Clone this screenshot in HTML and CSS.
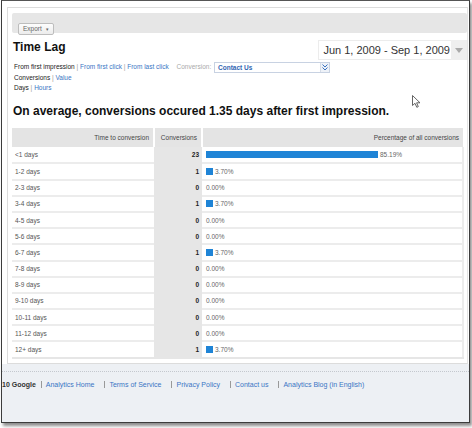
FILE: index.html
```html
<!DOCTYPE html>
<html lang="en">
<head>
    <meta charset="UTF-8">
    <title>Time Lag</title>
    <link rel="stylesheet" href="styles.css">
</head>
<body>
<div class="frame">
    <div class="top">
        <div class="panel">
            <div class="toolbar">
                <a href="javascript:;" class="export">Export <span class="caret">&#9662;</span></a>
            </div>
            <div class="head">
                <h1>Time Lag</h1>
                <div class="daterange">
                    <span class="dates">Jun 1, 2009 - Sep 1, 2009</span>
                    <span class="dd"><svg width="8" height="5" viewBox="0 0 8 5"><path d="M0 0h8L4 5z" fill="#aaa"/></svg></span>
                </div>
            </div>
            <div class="opts">
                <div class="optline">
                    <span class="cur">From first impression</span> | <a href="javascript:;">From first click</a> | <a href="javascript:;">From last click</a>
                    <span class="convlabel">Conversion:</span>
                    <span class="select">Contact Us
                        <span class="chev"><svg width="6" height="7" viewBox="0 0 6 7"><path d="M0.5 0.5L3 3L5.5 0.5M0.5 3.5L3 6L5.5 3.5" fill="none" stroke="#3a72c0" stroke-width="1"/></svg></span>
                    </span>
                </div>
                <div class="optline"><span class="cur">Conversions</span> | <a href="javascript:;">Value</a></div>
                <div class="optline"><span class="cur">Days</span> | <a href="javascript:;">Hours</a></div>
            </div>
            <svg class="pointer" width="9" height="13" viewBox="0 0 9 13"><path d="M0.5 0.5V10.5L3 8.3L4.8 12.3L6.3 11.6L4.6 7.8H8z" fill="#fff" stroke="#555" stroke-width="0.9"/></svg>
            <h2>On average, conversions occured 1.35 days after first impression.</h2>
            <table class="lag">
                <thead>
                <tr><th class="c1">Time to conversion</th><th class="c2">Conversions</th><th class="c3">Percentage of all conversions</th></tr>
                </thead>
                <tbody>
                <tr><td class="c1">&lt;1 days</td><td class="c2">23</td><td class="c3"><span class="bar" style="width:172px"></span>85.19%</td></tr>
                <tr><td class="c1">1-2 days</td><td class="c2">1</td><td class="c3"><span class="bar" style="width:7px"></span>3.70%</td></tr>
                <tr><td class="c1">2-3 days</td><td class="c2">0</td><td class="c3">0.00%</td></tr>
                <tr><td class="c1">3-4 days</td><td class="c2">1</td><td class="c3"><span class="bar" style="width:7px"></span>3.70%</td></tr>
                <tr><td class="c1">4-5 days</td><td class="c2">0</td><td class="c3">0.00%</td></tr>
                <tr><td class="c1">5-6 days</td><td class="c2">0</td><td class="c3">0.00%</td></tr>
                <tr><td class="c1">6-7 days</td><td class="c2">1</td><td class="c3"><span class="bar" style="width:7px"></span>3.70%</td></tr>
                <tr><td class="c1">7-8 days</td><td class="c2">0</td><td class="c3">0.00%</td></tr>
                <tr><td class="c1">8-9 days</td><td class="c2">0</td><td class="c3">0.00%</td></tr>
                <tr><td class="c1">9-10 days</td><td class="c2">0</td><td class="c3">0.00%</td></tr>
                <tr><td class="c1">10-11 days</td><td class="c2">0</td><td class="c3">0.00%</td></tr>
                <tr><td class="c1">11-12 days</td><td class="c2">0</td><td class="c3">0.00%</td></tr>
                <tr><td class="c1">12+ days</td><td class="c2">1</td><td class="c3"><span class="bar" style="width:7px"></span>3.70%</td></tr>
                </tbody>
            </table>
        </div>
    </div>
    <div class="footer">
        <span class="copy">10 Google</span>
        <a href="javascript:;">Analytics Home</a>
        <a href="javascript:;">Terms of Service</a>
        <a href="javascript:;">Privacy Policy</a>
        <a href="javascript:;">Contact us</a>
        <a href="javascript:;">Analytics Blog (in English)</a>
    </div>
</div>
</body>
</html>
```

FILE: styles.css
```css
*{
    margin:0;
    padding:0;
    box-sizing:border-box;
}
body{
    font-family:"Liberation Sans", Arial, sans-serif;
    color:#333;
    background:#fff;
    width:472px;
    height:428px;
    overflow:hidden;
}
a{
    color:#3a75c4;
    text-decoration:none;
}
.frame{
    width:469px;
    height:423px;
    margin-left:1px;
    border:1px solid #3c3c3c;
    border-top-color:#555;
    background:#edf0f4;
    box-shadow:2px 3px 3px rgba(0,0,0,.45);
    overflow:hidden;
}
.top{
    background:#fff;
    padding:6px 1px 0 5px;
}
.panel{
    position:relative;
    border:1px solid #dcdcdc;
    border-right-color:#e4e4e4;
    padding:5px 0 4px 4px;
}
.toolbar{
    height:20px;
    background:#e6e6e6;
    border-radius:2px;
    padding:4px 0 0 6px;
}
.export{
    display:inline-block;
    width:36px;
    height:12px;
    border:1px solid #bdbdbd;
    background:linear-gradient(#fdfdfd,#ececec);
    border-radius:2px;
    font-size:6.5px;
    line-height:10px;
    color:#666;
    padding-left:4px;
}
.caret{
    font-size:5px;
    margin-left:2px;
}
.head{
    display:flex;
    justify-content:space-between;
    align-items:flex-start;
    padding-top:6px;
}
h1{
    font-size:12px;
    color:#111;
    padding:1px 0 0 1px;
    line-height:14px;
}
.daterange{
    display:flex;
    height:20px;
    margin-top:1px;
}
.dates{
    border:1px solid #ececec;
    border-right:none;
    background:#fff;
    font-size:11px;
    color:#333;
    line-height:18px;
    padding:0 1px 0 4px;
}
.dd{
    width:16px;
    background:#efefef;
    display:flex;
    align-items:center;
    justify-content:center;
}
.opts{
    padding:2px 0 0 2px;
    font-size:6.5px;
    color:#999;
}
.optline{
    line-height:9.6px;
    white-space:nowrap;
}
.cur{
    color:#222;
}
.convlabel{
    color:#aaa;
    margin-left:6px;
}
.select{
    display:inline-flex;
    align-items:center;
    justify-content:space-between;
    width:116px;
    height:11px;
    border:1px solid #c8d2e2;
    vertical-align:middle;
    margin-left:1px;
    color:#2f66b3;
    font-weight:bold;
    padding-left:3px;
}
.chev{
    width:9px;
    height:9px;
    display:flex;
    align-items:center;
    justify-content:center;
    background:#eef2f8;
    border-left:1px solid #d6dde8;
}
.pointer{
    position:absolute;
    left:404px;
    top:87px;
}
h2{
    font-size:12px;
    color:#111;
    padding:13px 0 0 1px;
    line-height:13px;
}
.lag{
    margin-top:10px;
    width:452px;
    border-collapse:collapse;
    font-size:6.5px;
    color:#444;
}
.lag th{
    background:#e4e4e4;
    font-weight:normal;
    height:19px;
    text-align:right;
    padding:0 4px 0 0;
    border-left:2px solid #fff;
    color:#444;
}
.lag th.c1{
    border-left:none;
}
.lag td{
    height:16.2px;
    border-bottom:2px solid #ececec;
    padding:0;
}
.lag tbody tr:last-child td{
    border-bottom:2px solid #e6e6e6;
}
.lag td.c1{
    width:142px;
    padding-left:3px;
    color:#555;
}
.lag td.c2{
    width:48px;
    background:#e6e6e6;
    text-align:right;
    padding-right:3px;
    font-weight:bold;
    color:#222;
    border-bottom-color:#e6e6e6;
}
.lag td.c3{
    padding-left:4px;
    color:#666;
    border-right:2px solid #ececec;
}
.bar{
    display:inline-block;
    height:7px;
    background:#1f84d6;
    vertical-align:-1px;
    margin-right:2px;
}
.footer{
    margin-top:7px;
    border-top:1px dotted #c4c8ce;
    padding-top:9px;
    font-size:7px;
    white-space:nowrap;
}
.footer .copy{
    font-weight:bold;
    color:#333;
    padding-right:3px;
}
.footer a{
    border-left:1px solid #999;
    padding:0 8px 0 4px;
}
```
